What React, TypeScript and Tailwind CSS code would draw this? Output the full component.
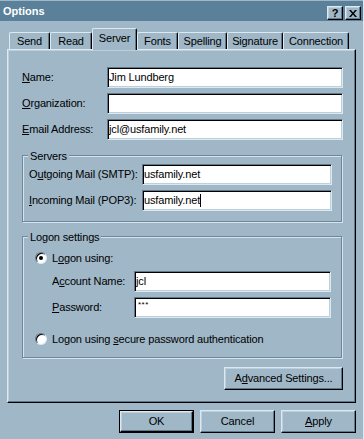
import React from 'react'

const raised =
  'border border-t-[#dce9f1] border-l-[#dce9f1] border-b-black border-r-black shadow-[inset_-1px_-1px_0_#61798b,inset_1px_1px_0_#bccfdb]'
const sunken =
  'border border-t-[#61798b] border-l-[#61798b] border-b-[#dce9f1] border-r-[#dce9f1] shadow-[inset_1px_1px_0_#000,inset_-1px_-1px_0_#bccfdb] bg-white'
const etched = 'border border-[#6e8899] shadow-[inset_1px_1px_0_#d4e3ec,1px_1px_0_#d4e3ec]'

const Field = ({ value, w, caret }: { value?: string; w: string; caret?: boolean }) => (
  <div className={`${sunken} ${w} h-[21px] pl-[1px] flex items-center`}>
    <span>{value}</span>
    {caret && <span className="w-[1px] h-[13px] bg-black" />}
  </div>
)

const Radio = ({ on }: { on?: boolean }) => (
  <span className="w-[12px] h-[12px] rounded-full bg-white border border-t-[#61798b] border-l-[#61798b] border-b-[#dce9f1] border-r-[#dce9f1] shadow-[inset_1px_1px_0_#000] flex items-center justify-center">
    {on && <span className="w-[4px] h-[4px] rounded-full bg-black" />}
  </span>
)

const Tab = ({ label, w, active }: { label: string; w: string; active?: boolean }) => (
  <div
    className={`${w} flex items-center justify-center rounded-t-[2px] border-t border-l border-r border-t-[#dce9f1] border-l-[#dce9f1] border-r-black shadow-[inset_-1px_0_0_#61798b] ${
      active ? 'h-[22px] -mb-[1px] relative z-10 bg-[#9fb7c7] pb-[3px]' : 'h-[17px] pt-[1px]'
    }`}
  >
    {label}
  </div>
)

export default function App() {
  return (
    <div className="w-[364px] h-[439px] bg-[#9fb7c7] text-black text-[11px] tracking-[-0.15px] font-['Liberation_Sans',Arial,sans-serif] flex flex-col border-r border-r-[#dce9f1] overflow-hidden">
      {/* title bar */}
      <div className="h-[20px] mt-[1px] bg-[#5a8199] flex items-center justify-between pl-[3px] pr-[2px]">
        <span className="text-white font-bold text-[11px] tracking-normal">Options</span>
        <div className="flex gap-[2px] mt-[4px]">
          <div className={`${raised} w-[16px] h-[14px] bg-[#9fb7c7] flex items-center justify-center font-bold text-[11px] leading-none`}>?</div>
          <div className={`${raised} w-[16px] h-[14px] bg-[#9fb7c7] flex items-center justify-center`}>
            <svg width="8" height="7" viewBox="0 0 8 7">
              <path d="M0 0h2l2 2.5L6 0h2L5 3.5 8 7H6L4 4.5 2 7H0l3-3.5z" fill="#000" />
            </svg>
          </div>
        </div>
      </div>

      {/* tabs */}
      <div className="flex items-end pl-[9px] mt-[6px] h-[22px]">
        <Tab label="Send" w="w-[41px]" />
        <Tab label="Read" w="w-[42px]" />
        <Tab label="Server" w="w-[45px]" active />
        <Tab label="Fonts" w="w-[41px]" />
        <Tab label="Spelling" w="w-[49px]" />
        <Tab label="Signature" w="w-[56px]" />
        <Tab label="Connection" w="w-[66px]" />
      </div>

      {/* panel */}
      <div className={`${raised} ml-[7px] w-[349px] h-[354px] pt-[17px] pl-[14px] flex flex-col`}>
        <div className="flex flex-col gap-[5px]">
          <div className="flex items-center">
            <span className="w-[85px]"><u>N</u>ame:</span>
            <Field value="Jim Lundberg" w="w-[236px]" />
          </div>
          <div className="flex items-center">
            <span className="w-[85px]"><u>O</u>rganization:</span>
            <Field w="w-[236px]" />
          </div>
          <div className="flex items-center">
            <span className="w-[85px]"><u>E</u>mail Address:</span>
            <Field value="jcl@usfamily.net" w="w-[236px]" />
          </div>
        </div>

        {/* servers */}
        <div className={`${etched} relative mt-[15px] w-[320px] h-[67px] pt-[8px] pl-[6px] flex flex-col gap-[5px]`}>
          <span className="absolute -top-[8px] left-[5px] px-[2px] bg-[#9fb7c7]">Servers</span>
          <div className="flex items-center">
            <span className="w-[113px]">O<u>u</u>tgoing Mail (SMTP):</span>
            <Field value="usfamily.net" w="w-[190px]" />
          </div>
          <div className="flex items-center">
            <span className="w-[113px]"><u>I</u>ncoming Mail (POP3):</span>
            <Field value="usfamily.net" w="w-[190px]" caret />
          </div>
        </div>

        {/* logon */}
        <div className={`${etched} relative mt-[14px] w-[320px] h-[122px] pl-[12px] flex flex-col`}>
          <span className="absolute -top-[8px] left-[5px] px-[2px] bg-[#9fb7c7]">Logon settings</span>
          <div className="flex items-center gap-[5px] mt-[13px]">
            <Radio on />
            <span>L<u>o</u>gon using:</span>
          </div>
          <div className="flex flex-col gap-[5px] mt-[4px] pl-[17px]">
            <div className="flex items-center">
              <span className="w-[82px]">A<u>c</u>count Name:</span>
              <Field value="jcl" w="w-[197px]" />
            </div>
            <div className="flex items-center">
              <span className="w-[82px]"><u>P</u>assword:</span>
              <div className={`${sunken} w-[197px] h-[21px] pl-[3px] pt-[3px] text-[8px] leading-none tracking-[0.5px]`}>***</div>
            </div>
          </div>
          <div className="flex items-center gap-[5px] mt-[13px]">
            <Radio />
            <span>Logon using <u>s</u>ecure password authentication</span>
          </div>
        </div>

        <div className="flex justify-end w-[321px] mt-[9px]">
          <div className={`${raised} w-[119px] h-[23px] flex items-center justify-center`}>
            A<u>d</u>vanced Settings...
          </div>
        </div>
      </div>

      {/* dialog buttons */}
      <div className="flex justify-end gap-[6px] mt-[7px] pr-[7px]">
        <div className="w-[75px] h-[23px] border border-black">
          <div className={`${raised} w-full h-full flex items-center justify-center`}>OK</div>
        </div>
        <div className={`${raised} w-[75px] h-[23px] flex items-center justify-center`}>Cancel</div>
        <div className={`${raised} w-[75px] h-[23px] flex items-center justify-center`}>
          <u>A</u>pply
        </div>
      </div>
    </div>
  )
}
